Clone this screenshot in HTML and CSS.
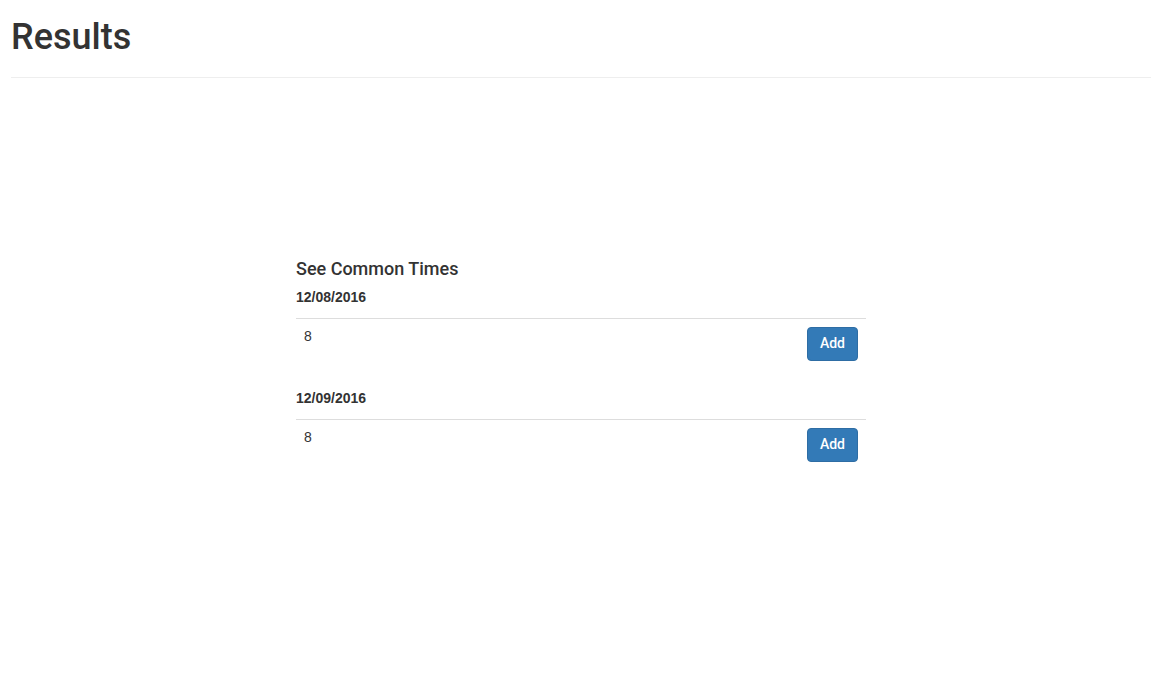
FILE: index.html
```html
<!DOCTYPE html>
<html>
<head>
<meta charset="utf-8">
<link rel="stylesheet" href="styles.css">
</head>
<body>
<div class="page">
  <div class="page-header">
    <h1>Results</h1>
  </div>
  <div class="results">
    <h4>See Common Times</h4>
    <div class="day">
      <div class="date">12/08/2016</div>
      <table class="table">
        <tr><td>8</td><td class="act"><button class="btn">Add</button></td></tr>
      </table>
    </div>
    <div class="day">
      <div class="date">12/09/2016</div>
      <table class="table">
        <tr><td>8</td><td class="act"><button class="btn">Add</button></td></tr>
      </table>
    </div>
  </div>
</div>
</body>
</html>
```

FILE: styles.css
```css
* { box-sizing: border-box; }
html, body { margin: 0; padding: 0; background: #fff; }
body {
  font-family: "Liberation Sans", Arial, Helvetica, sans-serif;
  font-size: 14px;
  line-height: 1.42857;
  color: #333;
}
.page {
  width: 1140px;
  margin-left: 11px;
}
.page-header {
  padding-top: 18px;
  padding-bottom: 9px;
  border-bottom: 1px solid #eee;
}
.page-header h1 {
  margin: 0 0 10px 0;
  font-family: Roboto, "Liberation Sans", sans-serif;
  font-size: 36px;
  font-weight: 500;
  line-height: 1.1;
}
.results {
  width: 570px;
  margin: 181px 0 0 285px;
}
.results h4 {
  margin: 0 0 10px 0;
  font-family: Roboto, "Liberation Sans", sans-serif;
  font-size: 18px;
  font-weight: 500;
  line-height: 1.1;
}
.date {
  font-weight: bold;
  margin-bottom: 10px;
}
.table {
  width: 100%;
  border-collapse: collapse;
  margin-bottom: 20px;
}
.table td {
  padding: 8px;
  border-top: 1px solid #ddd;
  vertical-align: top;
  line-height: 1.42857;
}
.table td.act { text-align: right; }
.btn {
  display: inline-block;
  padding: 6px 12px;
  font-family: Roboto, "Liberation Sans", sans-serif;
  font-weight: 500;
  font-size: 14px;
  line-height: 1.42857;
  color: #fff;
  background: #337ab7;
  border: 1px solid #2e6da4;
  border-radius: 4px;
  cursor: pointer;
}
```
